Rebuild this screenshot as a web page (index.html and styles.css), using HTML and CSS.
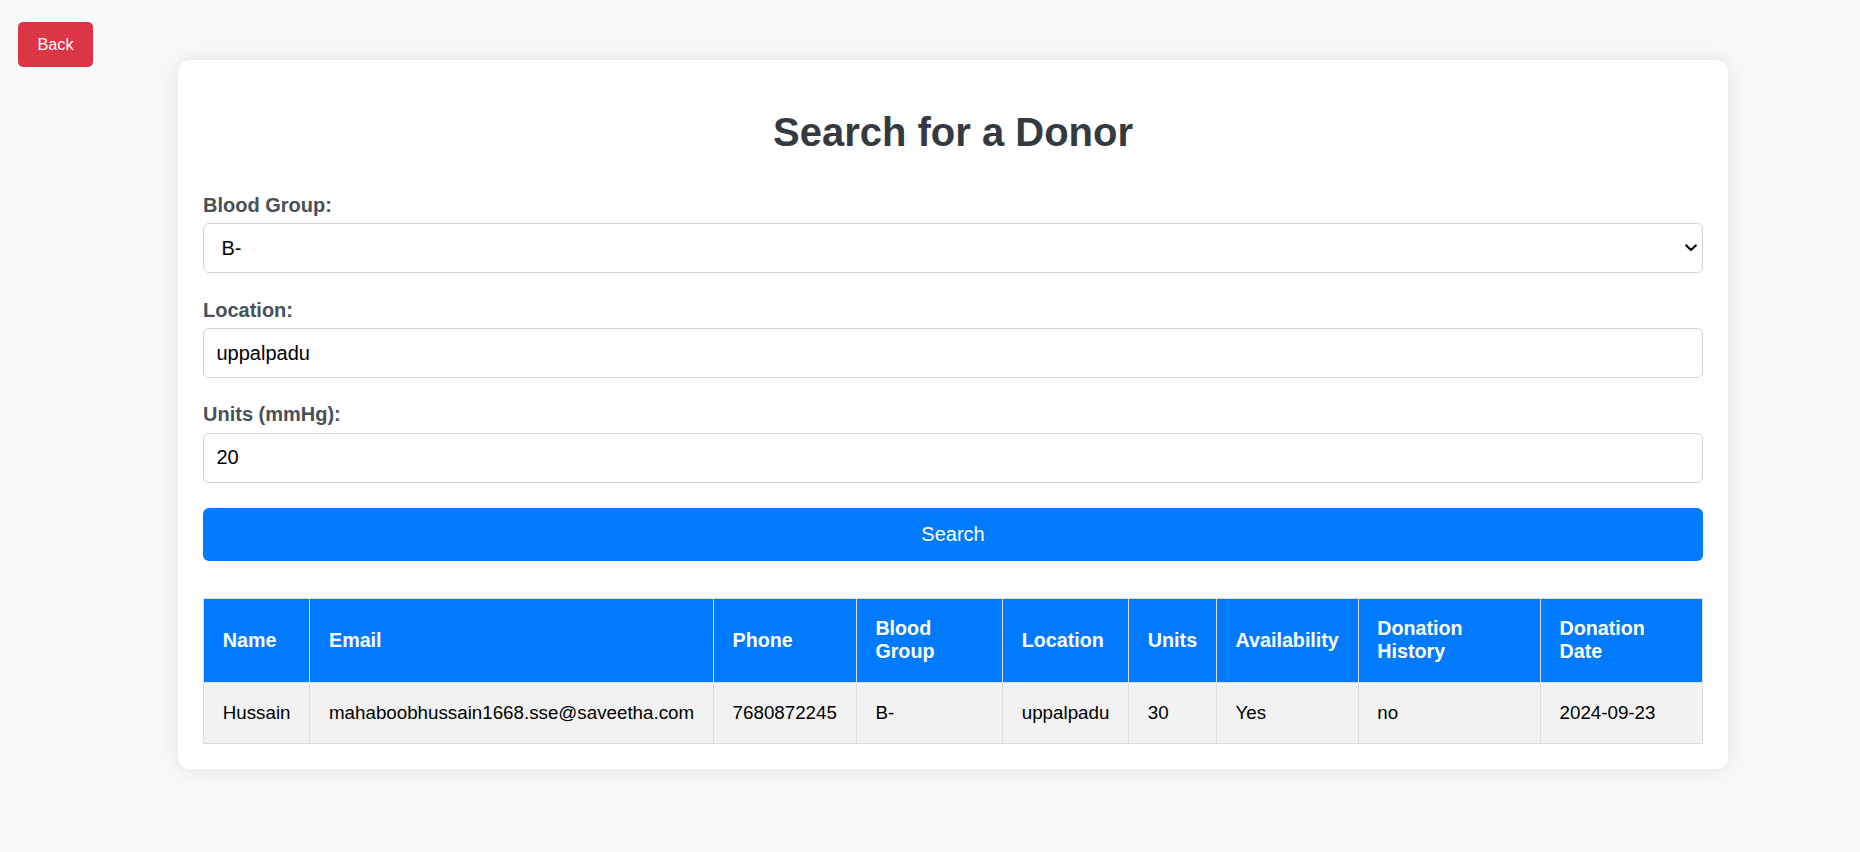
FILE: index.html
```html
<!DOCTYPE html>
<html lang="en">
<head>
<meta charset="utf-8">
<title>Search for a Donor</title>
<link rel="stylesheet" href="styles.css">
</head>
<body>
<button class="back-btn" type="button">Back</button>
<div class="page">
  <div class="card">
    <h2 class="title">Search for a Donor</h2>
    <form class="search-form">
      <div class="form-group">
        <label class="form-label" for="bg">Blood Group:</label>
        <div class="select-wrap">
          <select id="bg" class="form-control form-select">
            <option>A+</option>
            <option>A-</option>
            <option>B+</option>
            <option selected>B-</option>
            <option>AB+</option>
            <option>AB-</option>
            <option>O+</option>
            <option>O-</option>
          </select>
          <svg class="chevron" width="12" height="8" viewBox="0 0 12 8" aria-hidden="true"><path d="M1.2 1.4 L6 6 L10.8 1.4" fill="none" stroke="#111" stroke-width="2.2" stroke-linecap="round" stroke-linejoin="round"/></svg>
        </div>
      </div>
      <div class="form-group">
        <label class="form-label" for="loc">Location:</label>
        <input id="loc" class="form-control" type="text" value="uppalpadu">
      </div>
      <div class="form-group">
        <label class="form-label" for="units">Units (mmHg):</label>
        <input id="units" class="form-control" type="text" value="20">
      </div>
      <button class="search-btn" type="button">Search</button>
    </form>
    <table class="results">
      <thead>
        <tr>
          <th>Name</th>
          <th>Email</th>
          <th>Phone</th>
          <th>Blood Group</th>
          <th>Location</th>
          <th>Units</th>
          <th>Availability</th>
          <th>Donation History</th>
          <th>Donation Date</th>
        </tr>
      </thead>
      <tbody>
        <tr>
          <td>Hussain</td>
          <td>mahaboobhussain1668.sse@saveetha.com</td>
          <td>7680872245</td>
          <td>B-</td>
          <td>uppalpadu</td>
          <td>30</td>
          <td>Yes</td>
          <td>no</td>
          <td>2024-09-23</td>
        </tr>
      </tbody>
    </table>
  </div>
</div>
</body>
</html>
```
FILE: styles.css
```css
html, body {
  margin: 0;
  background: #f8f9fa;
  font-family: "Liberation Sans", Arial, sans-serif;
}

.back-btn {
  position: absolute;
  left: 18px;
  top: 22px;
  width: 75px;
  height: 45px;
  padding: 0;
  background: #dc3545;
  color: #fff;
  border: none;
  border-radius: 5px;
  font-family: "Liberation Sans", Arial, sans-serif;
  font-size: 16.3px;
  cursor: pointer;
}

.page {
  padding: 60px 0 84px 178px;
}

.card {
  width: 1550px;
  box-sizing: border-box;
  padding: 25px;
  background: #fff;
  border-radius: 12px;
  box-shadow: 0 0 22px rgba(0, 0, 0, 0.1);
}

.title {
  margin: 24px 0 38.8px;
  font-size: 40px;
  line-height: 46px;
  font-weight: bold;
  text-align: center;
  color: #343a40;
}

.form-group {
  margin-bottom: 25.25px;
}

.form-label {
  display: block;
  font-size: 20px;
  line-height: 23px;
  font-weight: bold;
  color: #495057;
  margin-bottom: 6.5px;
}

.form-control {
  display: block;
  width: 100%;
  box-sizing: border-box;
  height: 50px;
  margin: 0;
  padding: 12.5px;
  border: 1px solid #ced4da;
  border-radius: 6px;
  background: #fff;
  color: #000;
  font-family: "Liberation Sans", Arial, sans-serif;
  font-size: 20px;
  line-height: 23px;
  outline: none;
}

.select-wrap {
  position: relative;
}

.form-select {
  -webkit-appearance: none;
  appearance: none;
  padding-left: 17.5px;
}

.chevron {
  position: absolute;
  right: 6px;
  top: 21px;
  pointer-events: none;
}

.search-btn {
  display: block;
  width: 100%;
  height: 52.5px;
  margin: 0;
  padding: 0;
  border: none;
  border-radius: 6px;
  background: #007bff;
  color: #fff;
  font-family: "Liberation Sans", Arial, sans-serif;
  font-size: 20px;
  cursor: pointer;
}

.results {
  margin-top: 37px;
  width: 100%;
  border-collapse: collapse;
}

.results th,
.results td {
  border: 1px solid #dddddd;
  padding: 18.75px;
  text-align: left;
}

.results th {
  background: #007bff;
  color: #fff;
  font-size: 19.7px;
  font-weight: bold;
}

.results td {
  background: #f2f2f2;
  color: #000;
  font-size: 18.75px;
}
```
